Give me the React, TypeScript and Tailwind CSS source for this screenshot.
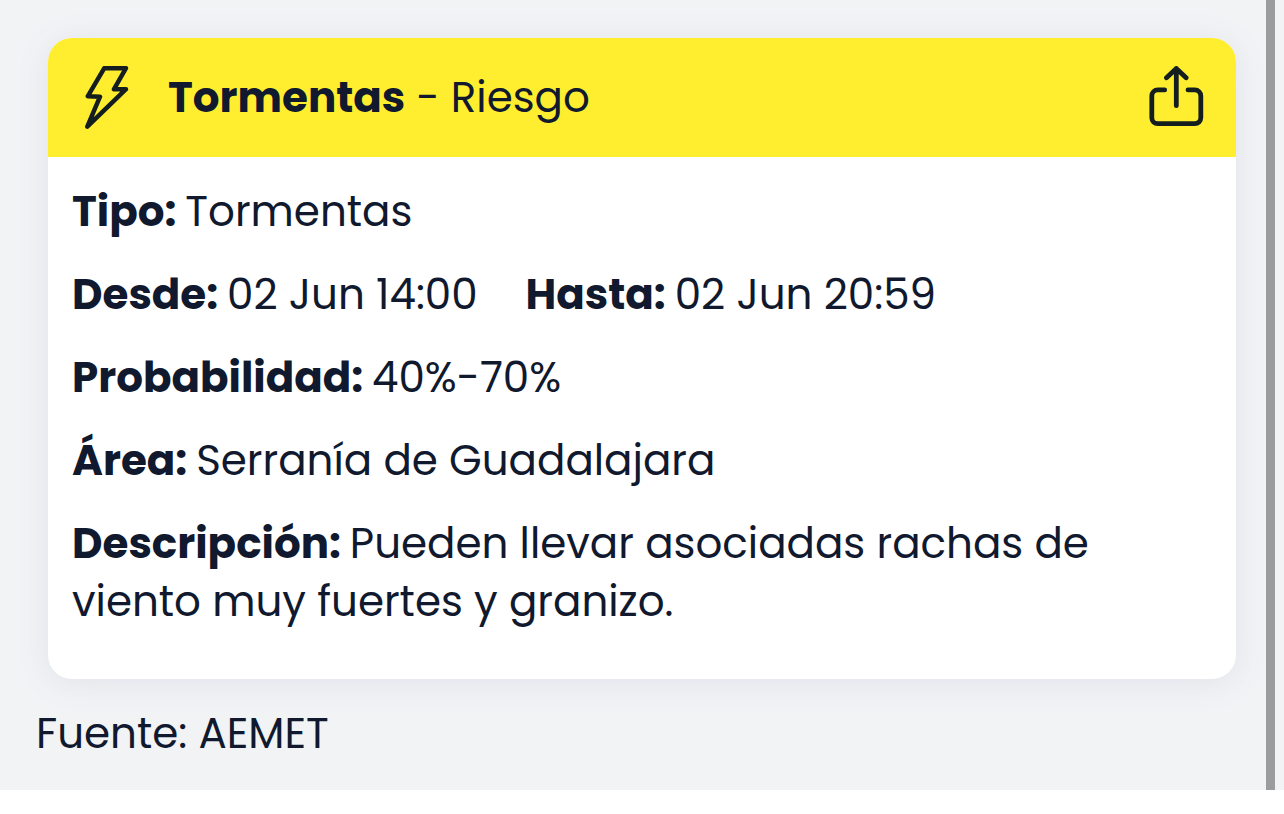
import type { ReactNode } from "react"

interface FieldProps {
  label: string
  children: ReactNode
}

function Field({ label, children }: FieldProps) {
  return (
    <div>
      <dt className="inline font-bold">{label}: </dt>
      <dd className="inline">{children}</dd>
    </div>
  )
}

function BoltIcon() {
  return (
    <svg
      className="h-16 w-12 shrink-0"
      viewBox="0 0 48 64"
      fill="none"
      stroke="#141e1e"
      strokeWidth="4.5"
      strokeLinecap="round"
      strokeLinejoin="round"
      aria-hidden="true"
    >
      <path d="M20.3 2.2H42L30 23.2H42L3.3 60.7L16 30.7L3.7 30.3Z" />
    </svg>
  )
}

function ShareIcon() {
  return (
    <svg
      className="h-16 w-14"
      viewBox="0 0 56 64"
      fill="none"
      stroke="#141e1e"
      strokeWidth="4.8"
      strokeLinecap="round"
      strokeLinejoin="round"
      aria-hidden="true"
    >
      <path d="M16.7 23.9H9.8a6 6 0 0 0-6 6V51.7a6 6 0 0 0 6 6h37a6 6 0 0 0 6-6V29.9a6 6 0 0 0-6-6H40" />
      <path d="M28.3 39.7V2.5M18.5 11.8l9.8-9.3l9.8 9.3" />
    </svg>
  )
}

function AlertCard() {
  return (
    <article className="ml-3 overflow-hidden rounded-3xl bg-white shadow-[0_4px_32px_#dfe3ea]">
      <header className="flex items-center bg-[#ffee30] pt-7 pr-8 pb-[27px] pl-9">
        <BoltIcon />
        <h1 className="ml-9 flex-1">
          <strong className="font-bold">Tormentas</strong> - Riesgo
        </h1>
        <button type="button" aria-label="Compartir">
          <ShareIcon />
        </button>
      </header>
      <dl className="flex flex-col gap-[25px] px-6 pt-[26px] pb-12">
        <Field label="Tipo">Tormentas</Field>
        <div className="flex flex-wrap gap-x-12">
          <Field label="Desde">02 Jun 14:00</Field>
          <Field label="Hasta">02 Jun 20:59</Field>
        </div>
        <Field label="Probabilidad">40%-70%</Field>
        <Field label="Área">Serranía de Guadalajara</Field>
        <Field label="Descripción">
          Pueden llevar asociadas rachas de viento muy fuertes y granizo.
        </Field>
      </dl>
    </article>
  )
}

export default function App() {
  return (
    <div className="flex bg-[#f2f3f5] font-[Poppins,Inter,sans-serif] text-[42px] leading-[58px] text-[#10192d]">
      <main className="min-w-0 flex-1 pt-[38px] pr-[30px] pb-[27px] pl-9">
        <AlertCard />
        <p className="mt-[26px]">Fuente: AEMET</p>
      </main>
      <div className="mr-[9px] w-[9px] bg-[#9b9c9e]" />
    </div>
  )
}
